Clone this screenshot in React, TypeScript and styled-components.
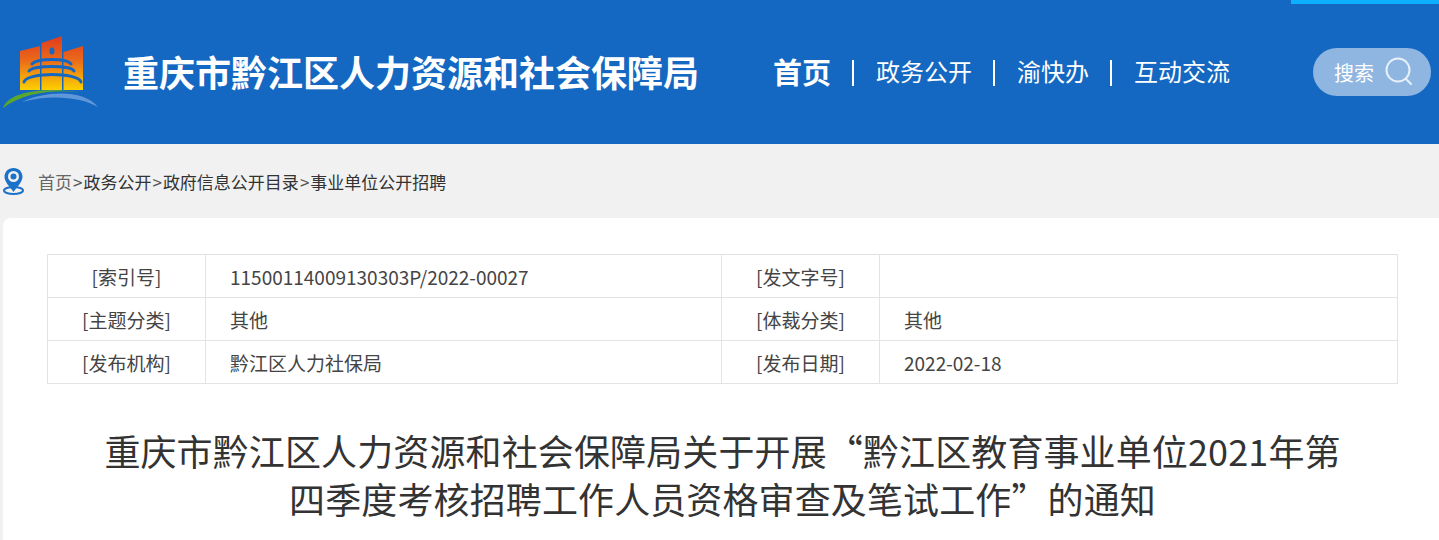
import styled, { createGlobalStyle } from 'styled-components';

const FONT = '"Noto Sans CJK SC", "Liberation Sans", sans-serif';

const GlobalStyle = createGlobalStyle`
    html, body {
        margin: 0;
        padding: 0;
        background: #f1f1f1;
        font-family: ${FONT};
        overflow: hidden;
    }
`;

const Page = styled.div`
    width: 1439px;
    height: 540px;
    overflow: hidden;
`;

const Header = styled.header`
    position: relative;
    display: flex;
    align-items: center;
    height: 144px;
    padding-left: 3px;
    box-sizing: border-box;
    background: #1468c2;
    color: #fff;
`;

const TopAccent = styled.div`
    position: absolute;
    top: 0;
    right: 0;
    width: 148px;
    height: 4px;
    background: #0db0ff;
`;

const SiteTitle = styled.h1`
    margin: -2px 0 0 20px;
    width: 650px;
    font-size: 36px;
    line-height: 48px;
    font-weight: 700;
    white-space: nowrap;
`;

const Nav = styled.nav`
    display: flex;
    align-items: center;
    margin-top: -2px;
`;

const NavLink = styled.a<{ $active?: boolean }>`
    font-size: ${(p) => (p.$active ? '29px' : '24px')};
    font-weight: ${(p) => (p.$active ? 700 : 400)};
    line-height: 40px;
    white-space: nowrap;
`;

const NavDivider = styled.span`
    width: 2px;
    height: 26px;
    margin: 3px 22px 0 21px;
    background: #fff;
`;

const SearchPill = styled.div`
    display: flex;
    align-items: center;
    gap: 11px;
    width: 118px;
    height: 48px;
    margin-left: 83px;
    padding-left: 21px;
    box-sizing: border-box;
    border-radius: 24px;
    background: #8fb6e0;
    font-size: 20px;
`;

const Crumbs = styled.div`
    display: flex;
    align-items: center;
    height: 74px;
    padding-left: 3px;
    box-sizing: border-box;
    font-size: 17px;
    color: #333;
`;

const CrumbHome = styled.span`
    margin-left: 14px;
    color: #666;
`;

const CrumbSep = styled.span`
    margin: 0 1px;
    color: #555;
`;

const Card = styled.main`
    margin-left: 3px;
    padding: 36px 41px 0 44px;
    height: 322px;
    box-sizing: border-box;
    border-radius: 8px 0 0 0;
    background: #fff;
`;

const MetaTable = styled.div`
    display: grid;
    grid-template-columns: 158px 516px 158px 518px;
    border-top: 1px solid #e3e3e3;
    border-left: 1px solid #e3e3e3;
    box-sizing: border-box;
`;

const MetaCell = styled.div<{ $label?: boolean }>`
    display: flex;
    align-items: center;
    justify-content: ${(p) => (p.$label ? 'center' : 'flex-start')};
    height: 43px;
    padding-left: ${(p) => (p.$label ? '0' : '24px')};
    box-sizing: border-box;
    border-right: 1px solid #e3e3e3;
    border-bottom: 1px solid #e3e3e3;
    font-size: 19px;
    color: #444;
    white-space: nowrap;
`;

const ArticleTitle = styled.h2`
    margin: 42px 0 0;
    font-size: 36px;
    line-height: 48px;
    font-weight: 400;
    letter-spacing: 0.12px;
    color: #333;
    text-align: center;
`;

const Logo = () => (
    <svg width="100" height="80" viewBox="0 0 100 80">
        <defs>
            <linearGradient id="tower" x1="0" y1="0" x2="0" y2="1">
                <stop offset="0" stopColor="#e03a1e" />
                <stop offset="0.45" stopColor="#ea6a1a" />
                <stop offset="1" stopColor="#fdd000" />
            </linearGradient>
        </defs>
        <path d="M17 19 L37 14 V58 H17 Z M38.5 11 L59 4 V58 H38.5 Z M60.5 20 L80 14 V58 H60.5 Z" fill="url(#tower)" />
        <ellipse cx="49" cy="19" rx="2.5" ry="3.5" fill="#1468c2" />
        <path d="M21 50 C24 40 75 40 78 50 M26 39 C30 33 68 33 71 39 M29 32 C34 26 64 26 68 32" fill="none" stroke="#1468c2" strokeWidth="3" strokeLinecap="round" />
        <path d="M0 76 C4 64 26 54 77 60 C50 58 22 60 0 76 Z" fill="#5aa72e" />
        <path d="M19 70 C44 58 82 58 95 75 C78 65 48 62 19 70 Z" fill="#5f97d8" />
    </svg>
);

const SearchIcon = () => (
    <svg width="28" height="30" viewBox="0 0 28 30" fill="none" stroke="#e8f0fa" strokeWidth="2">
        <circle cx="13" cy="13" r="11.5" />
        <path d="M21 22 L26 27" strokeLinecap="round" />
    </svg>
);

const PinIcon = () => (
    <svg width="21" height="28" viewBox="0 0 21 28">
        <ellipse cx="10.5" cy="23.5" rx="9.5" ry="3.5" fill="none" stroke="#1b72c8" strokeWidth="2" />
        <path d="M10.5 1 C5 1 1.5 5 1.5 9.8 C1.5 15 7 20 10.5 25 C14 20 19.5 15 19.5 9.8 C19.5 5 16 1 10.5 1 Z" fill="#1b72c8" />
        <circle cx="10.5" cy="9.5" r="5.5" fill="#f1f1f1" />
        <circle cx="10.5" cy="9.5" r="3" fill="#1b72c8" />
    </svg>
);

const metaRows = [
    ['[索引号]', '11500114009130303P/2022-00027', '[发文字号]', ''],
    ['[主题分类]', '其他', '[体裁分类]', '其他'],
    ['[发布机构]', '黔江区人力社保局', '[发布日期]', '2022-02-18'],
];

const App = () => {
    return (
        <Page>
            <GlobalStyle />
            <Header>
                <TopAccent />
                <Logo />
                <SiteTitle>重庆市黔江区人力资源和社会保障局</SiteTitle>
                <Nav>
                    <NavLink $active>首页</NavLink>
                    <NavDivider />
                    <NavLink>政务公开</NavLink>
                    <NavDivider />
                    <NavLink>渝快办</NavLink>
                    <NavDivider />
                    <NavLink>互动交流</NavLink>
                </Nav>
                <SearchPill>
                    搜索
                    <SearchIcon />
                </SearchPill>
            </Header>
            <Crumbs>
                <PinIcon />
                <CrumbHome>首页</CrumbHome>
                <CrumbSep>&gt;</CrumbSep>政务公开
                <CrumbSep>&gt;</CrumbSep>政府信息公开目录
                <CrumbSep>&gt;</CrumbSep>事业单位公开招聘
            </Crumbs>
            <Card>
                <MetaTable>
                    {metaRows.flatMap((row, r) =>
                        row.map((text, c) => (
                            <MetaCell key={`${r}-${c}`} $label={c % 2 === 0}>
                                {text}
                            </MetaCell>
                        )),
                    )}
                </MetaTable>
                <ArticleTitle>
                    重庆市黔江区人力资源和社会保障局关于开展“黔江区教育事业单位2021年第
                    <br />
                    四季度考核招聘工作人员资格审查及笔试工作”的通知
                </ArticleTitle>
            </Card>
        </Page>
    );
};

export default App;
